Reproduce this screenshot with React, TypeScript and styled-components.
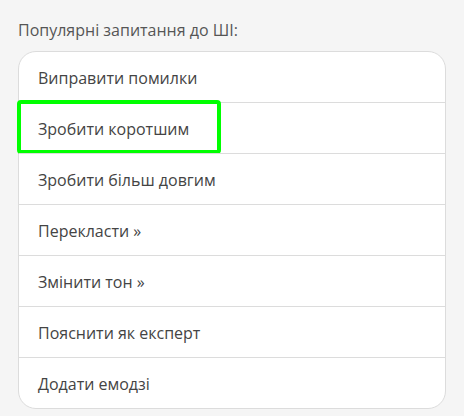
import styled, { createGlobalStyle } from 'styled-components';

const GlobalStyle = createGlobalStyle`
  html, body {
    margin: 0;
    padding: 0;
    background: #f5f5f5;
  }
  body {
    font-family: "Open Sans", "Noto Sans", sans-serif;
  }
`;

const Page = styled.div`
  padding: 18px 18px 0 18px;
  width: 428px;
`;

const Heading = styled.div`
  font-size: 16px;
  line-height: 24px;
  color: #555;
  margin-bottom: 9px;
`;

const List = styled.ul`
  list-style: none;
  margin: 0;
  padding: 0;
  background: #fff;
  border: 1px solid #dcdcdc;
  border-radius: 18px;
`;

const Item = styled.li`
  position: relative;
  height: 50px;
  box-sizing: border-box;
  padding: 2px 19px 0;
  display: flex;
  align-items: center;
  font-size: 16px;
  color: #444;
  & + & {
    border-top: 1px solid #dcdcdc;
    height: 51px;
  }
`;

const Highlight = styled.span`
  position: absolute;
  left: -2px;
  top: -3px;
  width: 204px;
  height: 54px;
  box-sizing: border-box;
  border: 4px solid #00ff00;
  border-radius: 4px;
  pointer-events: none;
`;

const prompts = [
  'Виправити помилки',
  'Зробити коротшим',
  'Зробити більш довгим',
  'Перекласти »',
  'Змінити тон »',
  'Пояснити як експерт',
  'Додати емодзі',
];

const App = () => (
  <>
    <GlobalStyle />
    <Page>
      <Heading>Популярні запитання до ШІ:</Heading>
      <List>
        {prompts.map((p, i) => (
          <Item key={p}>
            {p}
            {i === 1 && <Highlight />}
          </Item>
        ))}
      </List>
    </Page>
  </>
);

export default App;
